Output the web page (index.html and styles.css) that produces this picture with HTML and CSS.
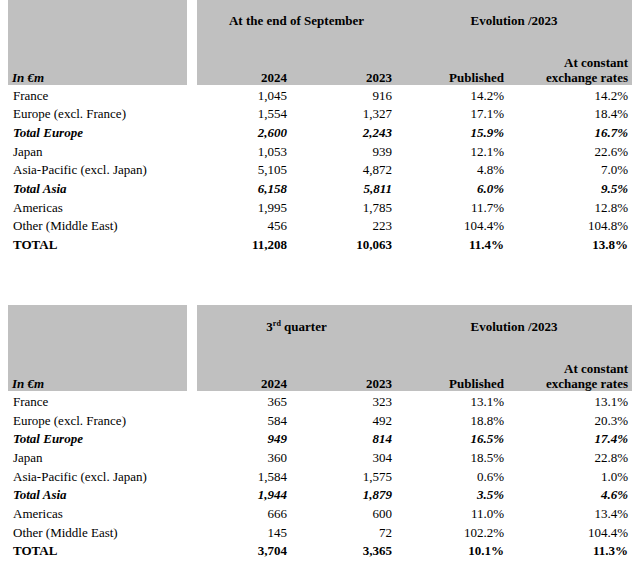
FILE: index.html
```html
<!DOCTYPE html>
<html lang="en">
<head>
<meta charset="utf-8">
<title>Sales by region</title>
<link rel="stylesheet" href="styles.css">
</head>
<body>
<main class="page">
  <table class="sales sales-first">
    <colgroup>
      <col class="c-label"><col class="c-gap"><col class="c-n1"><col class="c-n2"><col class="c-n3"><col class="c-n4">
    </colgroup>
    <thead>
      <tr class="h1">
        <th class="hd hd-label" rowspan="2">In €m</th>
        <th class="gap" rowspan="2"></th>
        <th class="hd title" colspan="2">At the end of September</th>
        <th class="hd title" colspan="2">Evolution /2023</th>
      </tr>
      <tr class="h2">
        <th class="hd num">2024</th>
        <th class="hd num">2023</th>
        <th class="hd num">Published</th>
        <th class="hd num">At constant<br>exchange rates</th>
      </tr>
    </thead>
    <tbody>
      <tr class="first"><td class="lbl">France</td><td></td><td class="num">1,045</td><td class="num">916</td><td class="num">14.2%</td><td class="num">14.2%</td></tr>
      <tr><td class="lbl">Europe (excl. France)</td><td></td><td class="num">1,554</td><td class="num">1,327</td><td class="num">17.1%</td><td class="num">18.4%</td></tr>
      <tr class="sub"><td class="lbl">Total Europe</td><td></td><td class="num">2,600</td><td class="num">2,243</td><td class="num">15.9%</td><td class="num">16.7%</td></tr>
      <tr><td class="lbl">Japan</td><td></td><td class="num">1,053</td><td class="num">939</td><td class="num">12.1%</td><td class="num">22.6%</td></tr>
      <tr><td class="lbl">Asia-Pacific (excl. Japan)</td><td></td><td class="num">5,105</td><td class="num">4,872</td><td class="num">4.8%</td><td class="num">7.0%</td></tr>
      <tr class="sub"><td class="lbl">Total Asia</td><td></td><td class="num">6,158</td><td class="num">5,811</td><td class="num">6.0%</td><td class="num">9.5%</td></tr>
      <tr><td class="lbl">Americas</td><td></td><td class="num">1,995</td><td class="num">1,785</td><td class="num">11.7%</td><td class="num">12.8%</td></tr>
      <tr><td class="lbl">Other (Middle East)</td><td></td><td class="num">456</td><td class="num">223</td><td class="num">104.4%</td><td class="num">104.8%</td></tr>
      <tr class="total"><td class="lbl">TOTAL</td><td></td><td class="num">11,208</td><td class="num">10,063</td><td class="num">11.4%</td><td class="num">13.8%</td></tr>
    </tbody>
  </table>

  <table class="sales sales-second">
    <colgroup>
      <col class="c-label"><col class="c-gap"><col class="c-n1"><col class="c-n2"><col class="c-n3"><col class="c-n4">
    </colgroup>
    <thead>
      <tr class="h1">
        <th class="hd hd-label" rowspan="2">In €m</th>
        <th class="gap" rowspan="2"></th>
        <th class="hd title" colspan="2">3<sup>rd</sup> quarter</th>
        <th class="hd title" colspan="2">Evolution /2023</th>
      </tr>
      <tr class="h2">
        <th class="hd num">2024</th>
        <th class="hd num">2023</th>
        <th class="hd num">Published</th>
        <th class="hd num">At constant<br>exchange rates</th>
      </tr>
    </thead>
    <tbody>
      <tr class="first"><td class="lbl">France</td><td></td><td class="num">365</td><td class="num">323</td><td class="num">13.1%</td><td class="num">13.1%</td></tr>
      <tr><td class="lbl">Europe (excl. France)</td><td></td><td class="num">584</td><td class="num">492</td><td class="num">18.8%</td><td class="num">20.3%</td></tr>
      <tr class="sub"><td class="lbl">Total Europe</td><td></td><td class="num">949</td><td class="num">814</td><td class="num">16.5%</td><td class="num">17.4%</td></tr>
      <tr><td class="lbl">Japan</td><td></td><td class="num">360</td><td class="num">304</td><td class="num">18.5%</td><td class="num">22.8%</td></tr>
      <tr><td class="lbl">Asia-Pacific (excl. Japan)</td><td></td><td class="num">1,584</td><td class="num">1,575</td><td class="num">0.6%</td><td class="num">1.0%</td></tr>
      <tr class="sub"><td class="lbl">Total Asia</td><td></td><td class="num">1,944</td><td class="num">1,879</td><td class="num">3.5%</td><td class="num">4.6%</td></tr>
      <tr><td class="lbl">Americas</td><td></td><td class="num">666</td><td class="num">600</td><td class="num">11.0%</td><td class="num">13.4%</td></tr>
      <tr><td class="lbl">Other (Middle East)</td><td></td><td class="num">145</td><td class="num">72</td><td class="num">102.2%</td><td class="num">104.4%</td></tr>
      <tr class="total"><td class="lbl">TOTAL</td><td></td><td class="num">3,704</td><td class="num">3,365</td><td class="num">10.1%</td><td class="num">11.3%</td></tr>
    </tbody>
  </table>
</main>
</body>
</html>
```

FILE: styles.css
```css
html, body {
  margin: 0;
  padding: 0;
  background: #ffffff;
}

body {
  font-family: "Liberation Serif", "Times New Roman", serif;
  font-size: 13px;
  color: #000000;
}

.page {
  padding-left: 8px;
  width: 624px;
}

.sales {
  width: 624px;
  table-layout: fixed;
  border-collapse: collapse;
  border-spacing: 0;
}

.sales-first {
  margin-top: -1px;
}

.sales-second {
  margin-top: 50.5px;
}

.c-label { width: 179px; }
.c-gap { width: 10px; }
.c-n1 { width: 94px; }
.c-n2 { width: 105px; }
.c-n3 { width: 112px; }
.c-n4 { width: 124px; }

.sales th,
.sales td {
  padding: 0;
  white-space: nowrap;
}

.hd {
  background: #c0c0c0;
  font-weight: bold;
  line-height: 15px;
}

.gap {
  background: transparent;
}

.h1 .title {
  height: 55px;
  box-sizing: border-box;
  padding-top: 13.5px;
  vertical-align: top;
  text-align: center;
}

.h2 .hd {
  height: 31px;
  box-sizing: border-box;
  padding: 0 4px 0 0;
  vertical-align: bottom;
  text-align: right;
}

.hd-label {
  text-align: left;
  vertical-align: bottom;
  font-style: italic;
  padding: 0 0 0 4px !important;
}

.title sup {
  font-size: 8px;
  line-height: 0;
  vertical-align: 5px;
}

.sales tbody td {
  line-height: 18.7px;
  height: 18.7px;
}

.sales tbody .first td {
  padding-top: 1.5px;
}

.lbl {
  padding-left: 5px !important;
  text-align: left;
}

.num {
  text-align: right;
  padding-right: 4px !important;
}

.sub td {
  font-weight: bold;
  font-style: italic;
}

.total td {
  font-weight: bold;
}
```
